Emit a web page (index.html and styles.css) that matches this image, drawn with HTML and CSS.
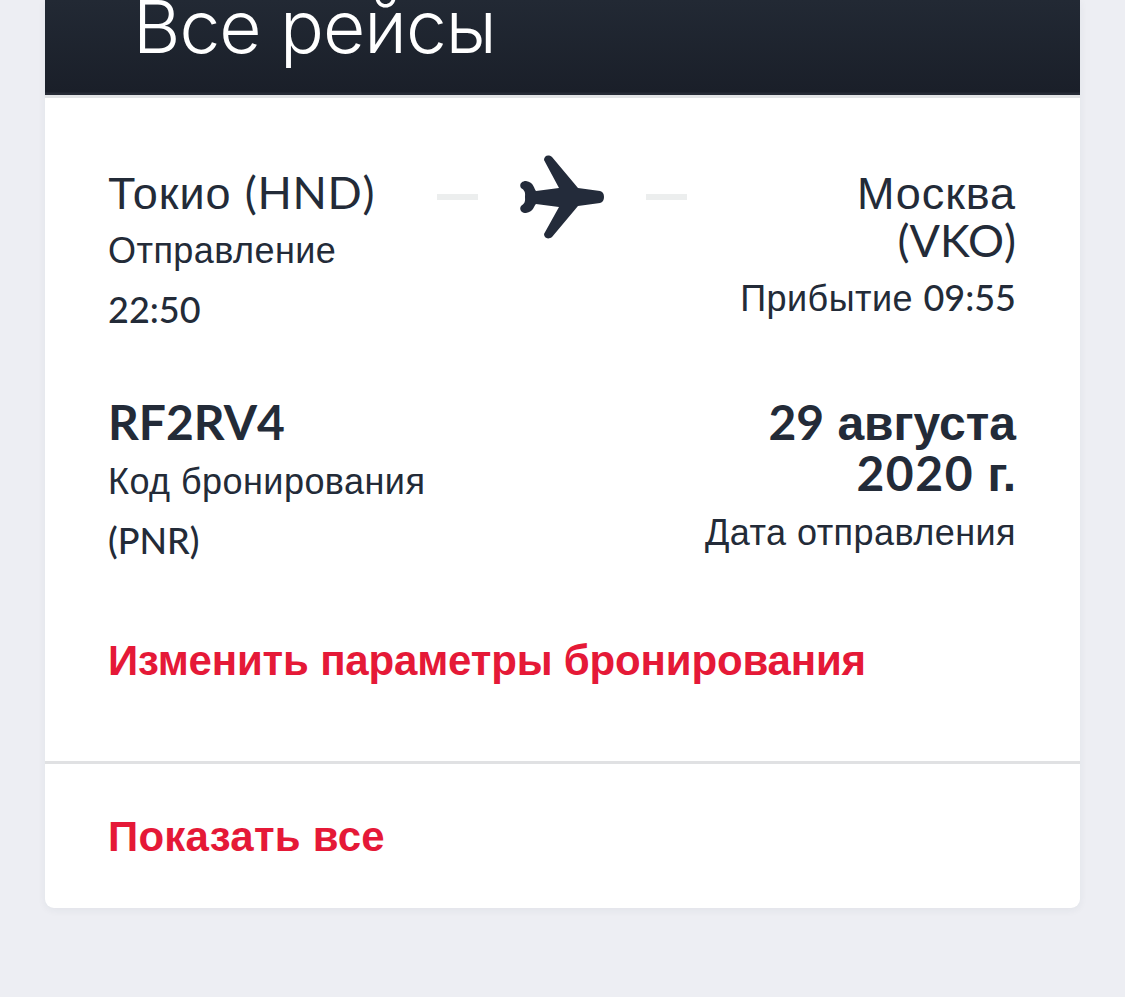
FILE: index.html
```
<!DOCTYPE html>
<html lang="ru">
<head>
	<title>Все рейсы</title>
	<meta charset="utf-8">
	<link rel="stylesheet" href="styles.css">
</head>

<body>

<section class="card">
	<header class="card-header">
		<h1>Все рейсы</h1>
	</header>

	<div class="flight">
		<div class="row route">
			<div class="from">
				<h2>Токио <span class="latin">(HND)</span></h2>
				<p>Отправление<br><span class="latin">22:50</span></p>
			</div>
			<div class="path">
				<span class="dash"></span>
				<svg class="plane" viewBox="0 0 84 84">
					<path d="M24 5C24 1 28-1 32 2L58 33L80 36Q84 37 84 42Q84 47 80 48L58 51L32 82C28 85 24 83 24 79L39 52L16 49C14 50 14 57 6 58C1 58-1 54 1 51C6 48 5 45 5 42C5 39 6 36 1 33C-1 30 1 26 6 26C14 27 14 34 16 36L39 33Z"/>
				</svg>
				<span class="dash"></span>
			</div>
			<div class="to">
				<h2>Москва<br><span class="latin">(VKO)</span></h2>
				<p>Прибытие <span class="latin">09:55</span></p>
			</div>
		</div>

		<div class="row booking">
			<div class="from">
				<h3><span class="latin">RF2RV4</span></h3>
				<p>Код бронирования<br><span class="latin">(PNR)</span></p>
			</div>
			<div class="to">
				<h3><span class="latin">29</span> августа<br><span class="latin year">2020</span> г.</h3>
				<p>Дата отправления</p>
			</div>
		</div>

		<a class="link">Изменить параметры бронирования</a>
	</div>

	<footer class="card-footer">
		<a class="link show-all">Показать все</a>
	</footer>
</section>

</body>
</html>
```

FILE: styles.css
```
* {
	box-sizing: border-box;
}
body {
	margin: 0;
	padding: 0 45px;
	height: 997px;
	overflow: hidden;
	color: #232b38;
	background: #edeef3;
	font-family: "Liberation Sans", Arial, sans-serif;
}
h1, h2, h3, p {
	margin: 0;
}
.card {
	height: 908px;
	background: #fff;
	border-radius: 0 0 9px 9px;
	box-shadow: 0 2px 8px rgba(40, 45, 65, 0.06);
}
.card-header {
	display: flex;
	align-items: flex-end;
	height: 98px;
	padding: 0 88px 26px;
	overflow: hidden;
	background: linear-gradient(#222934, #1a1f29 92px, #262b36 93px);
	border-bottom: 3px solid #e2e4e6;
	background-clip: padding-box;
}
h1 {
	color: #fff;
	font: 300 73px/84px Inter, sans-serif;
	letter-spacing: -1px;
}
.flight {
	height: 666px;
	padding: 72px 64px 0 63px;
	border-bottom: 3px solid #e0e1e3;
}
.row {
	display: flex;
	justify-content: space-between;
}
.route {
	height: 228px;
}
.booking {
	height: 239px;
}
.to {
	text-align: right;
}
.route .from, .route .to {
	width: 329px;
}
h2 {
	margin-bottom: 3px;
	font-size: 45px;
	font-weight: normal;
	line-height: 48px;
	letter-spacing: 0.9px;
}
h3 {
	margin-bottom: 3px;
	font-size: 48px;
	line-height: 51px;
}
p {
	font-size: 36px;
	line-height: 60px;
	letter-spacing: 0.45px;
}
/* latin letters and digits use a different face than cyrillic */
.latin {
	font-family: Lato, sans-serif;
	line-height: 1;
	letter-spacing: 0;
}
.from h2 .latin {
	letter-spacing: 0.7px;
}
p .latin {
	font-weight: 500;
}
.year {
	letter-spacing: 1.6px;
}
.path {
	display: flex;
	align-items: center;
	justify-content: space-between;
	width: 250px;
	height: 84px;
	margin-top: -15px;
}
.dash {
	width: 41px;
	height: 6px;
	background: #eceeee;
}
.plane {
	width: 84px;
	height: 84px;
	fill: #232b3a;
}
.link {
	display: block;
	color: #e51937;
	font-size: 42px;
	font-weight: bold;
	line-height: 48px;
	letter-spacing: -0.17px;
}
.show-all {
	letter-spacing: 0.25px;
}
.card-footer {
	padding: 49px 63px 0;
}
```
